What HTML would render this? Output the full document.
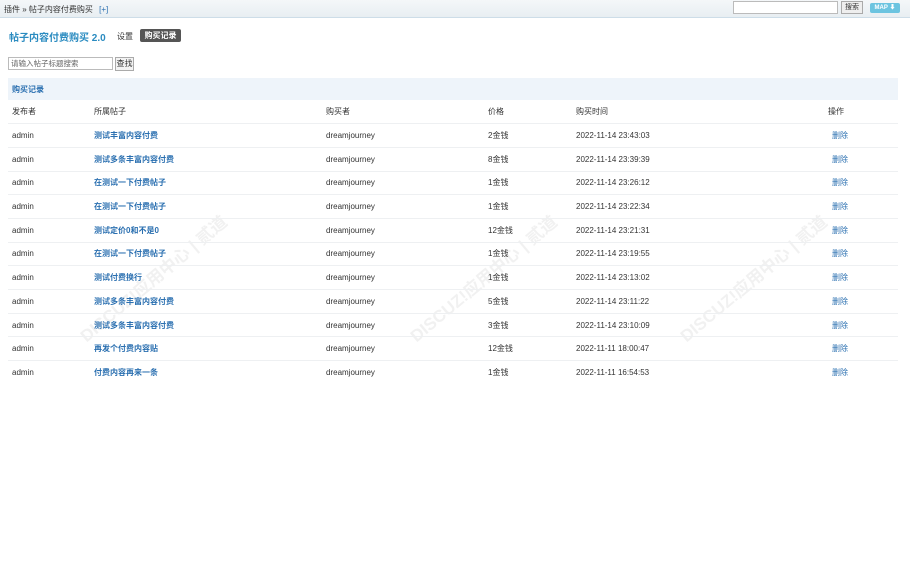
<!DOCTYPE html>
<html><head><meta charset="utf-8"><style>
*{margin:0;padding:0;box-sizing:border-box}
body{width:910px;height:565px;background:#fff;font-family:"Liberation Sans","Noto Sans CJK SC",sans-serif;font-size:8px;color:#333;position:relative;overflow:hidden}
.top{position:absolute;left:0;top:0;width:910px;height:18px;background:linear-gradient(#f4f7f9,#e8eef2);border-bottom:1px solid #cddde8}
.top .bc{position:absolute;left:4px;top:4px;font-size:8px;color:#333}
.top .bc b{font-weight:normal;color:#2a6fb0;margin-left:4px}
.sinp{position:absolute;left:733px;top:1px;width:105px;height:13px;border:1px solid #bbb;background:#fff}
.sbtn{position:absolute;left:841px;top:1px;width:22px;height:13px;border:1px solid #aaa;background:#eee;font-size:7px;text-align:center;line-height:11px}
.map{position:absolute;left:870px;top:3px;width:30px;height:10px;background:#6cc4e0;border-radius:2px;color:#fff;font-size:6px;font-weight:bold;text-align:center;line-height:10px}
.title{position:absolute;left:9px;top:29px;font-size:10px;color:#2a8bc0;font-weight:bold}
.set{position:absolute;left:117px;top:31px;font-size:8px}
.tab{position:absolute;left:140px;top:29px;width:41px;height:13px;background:#555;color:#fff;border-radius:2px;font-size:8px;font-weight:bold;text-align:center;line-height:13px}
.inp{position:absolute;left:8px;top:57px;width:105px;height:13px;border:1px solid #bbb;font-size:7.5px;color:#666;padding-left:2px;line-height:11px}
.btn{position:absolute;left:115px;top:57px;width:19px;height:14px;border:1px solid #aaa;background:#f3f3f3;font-size:8px;text-align:center;line-height:12px}
.bar{position:absolute;left:8px;top:78px;width:890px;height:22px;background:#eef4fa;color:#2a6fb0;font-size:8px;font-weight:bold;padding:6px 4px}
table{position:absolute;left:8px;top:100px;width:890px;border-collapse:collapse}
td{height:23.7px;border-bottom:1px solid #eef0f2;padding-left:4px;font-size:8px;white-space:nowrap}
td.l{color:#2a6fb0;font-weight:bold}
td.d{color:#2a6fb0;padding-left:8px}
.wm{position:absolute;color:rgba(170,170,170,.16);font-size:17px;font-weight:bold;transform:rotate(-40deg);white-space:nowrap}
</style></head><body>
<div class="top"><div class="bc">插件 » 帖子内容付费购买 <b>[+]</b></div><div class="sinp"></div><div class="sbtn">搜索</div><div class="map">MAP ⬇</div></div>
<div class="title">帖子内容付费购买 2.0</div>
<div class="set">设置</div><div class="tab">购买记录</div>
<div class="inp">请输入帖子标题搜索</div><div class="btn">查找</div>
<div class="bar">购买记录</div>
<div class="wm" style="left:60px;top:265px">DISCUZ!应用中心 | 贰道</div>
<div class="wm" style="left:390px;top:265px">DISCUZ!应用中心 | 贰道</div>
<div class="wm" style="left:660px;top:265px">DISCUZ!应用中心 | 贰道</div>
<table>
<colgroup><col style="width:82px"><col style="width:232px"><col style="width:162px"><col style="width:88px"><col style="width:252px"><col></colgroup>
<tr><td>发布者</td><td>所属帖子</td><td>购买者</td><td>价格</td><td>购买时间</td><td>操作</td></tr>
<tr><td>admin</td><td class="l">测试丰富内容付费</td><td>dreamjourney</td><td>2金钱</td><td>2022-11-14 23:43:03</td><td class="d">删除</td></tr>
<tr><td>admin</td><td class="l">测试多条丰富内容付费</td><td>dreamjourney</td><td>8金钱</td><td>2022-11-14 23:39:39</td><td class="d">删除</td></tr>
<tr><td>admin</td><td class="l">在测试一下付费帖子</td><td>dreamjourney</td><td>1金钱</td><td>2022-11-14 23:26:12</td><td class="d">删除</td></tr>
<tr><td>admin</td><td class="l">在测试一下付费帖子</td><td>dreamjourney</td><td>1金钱</td><td>2022-11-14 23:22:34</td><td class="d">删除</td></tr>
<tr><td>admin</td><td class="l">测试定价0和不是0</td><td>dreamjourney</td><td>12金钱</td><td>2022-11-14 23:21:31</td><td class="d">删除</td></tr>
<tr><td>admin</td><td class="l">在测试一下付费帖子</td><td>dreamjourney</td><td>1金钱</td><td>2022-11-14 23:19:55</td><td class="d">删除</td></tr>
<tr><td>admin</td><td class="l">测试付费换行</td><td>dreamjourney</td><td>1金钱</td><td>2022-11-14 23:13:02</td><td class="d">删除</td></tr>
<tr><td>admin</td><td class="l">测试多条丰富内容付费</td><td>dreamjourney</td><td>5金钱</td><td>2022-11-14 23:11:22</td><td class="d">删除</td></tr>
<tr><td>admin</td><td class="l">测试多条丰富内容付费</td><td>dreamjourney</td><td>3金钱</td><td>2022-11-14 23:10:09</td><td class="d">删除</td></tr>
<tr><td>admin</td><td class="l">再发个付费内容贴</td><td>dreamjourney</td><td>12金钱</td><td>2022-11-11 18:00:47</td><td class="d">删除</td></tr>
<tr><td style="border:0">admin</td><td class="l" style="border:0">付费内容再来一条</td><td style="border:0">dreamjourney</td><td style="border:0">1金钱</td><td style="border:0">2022-11-11 16:54:53</td><td class="d" style="border:0">删除</td></tr>
</table>
</body></html>
